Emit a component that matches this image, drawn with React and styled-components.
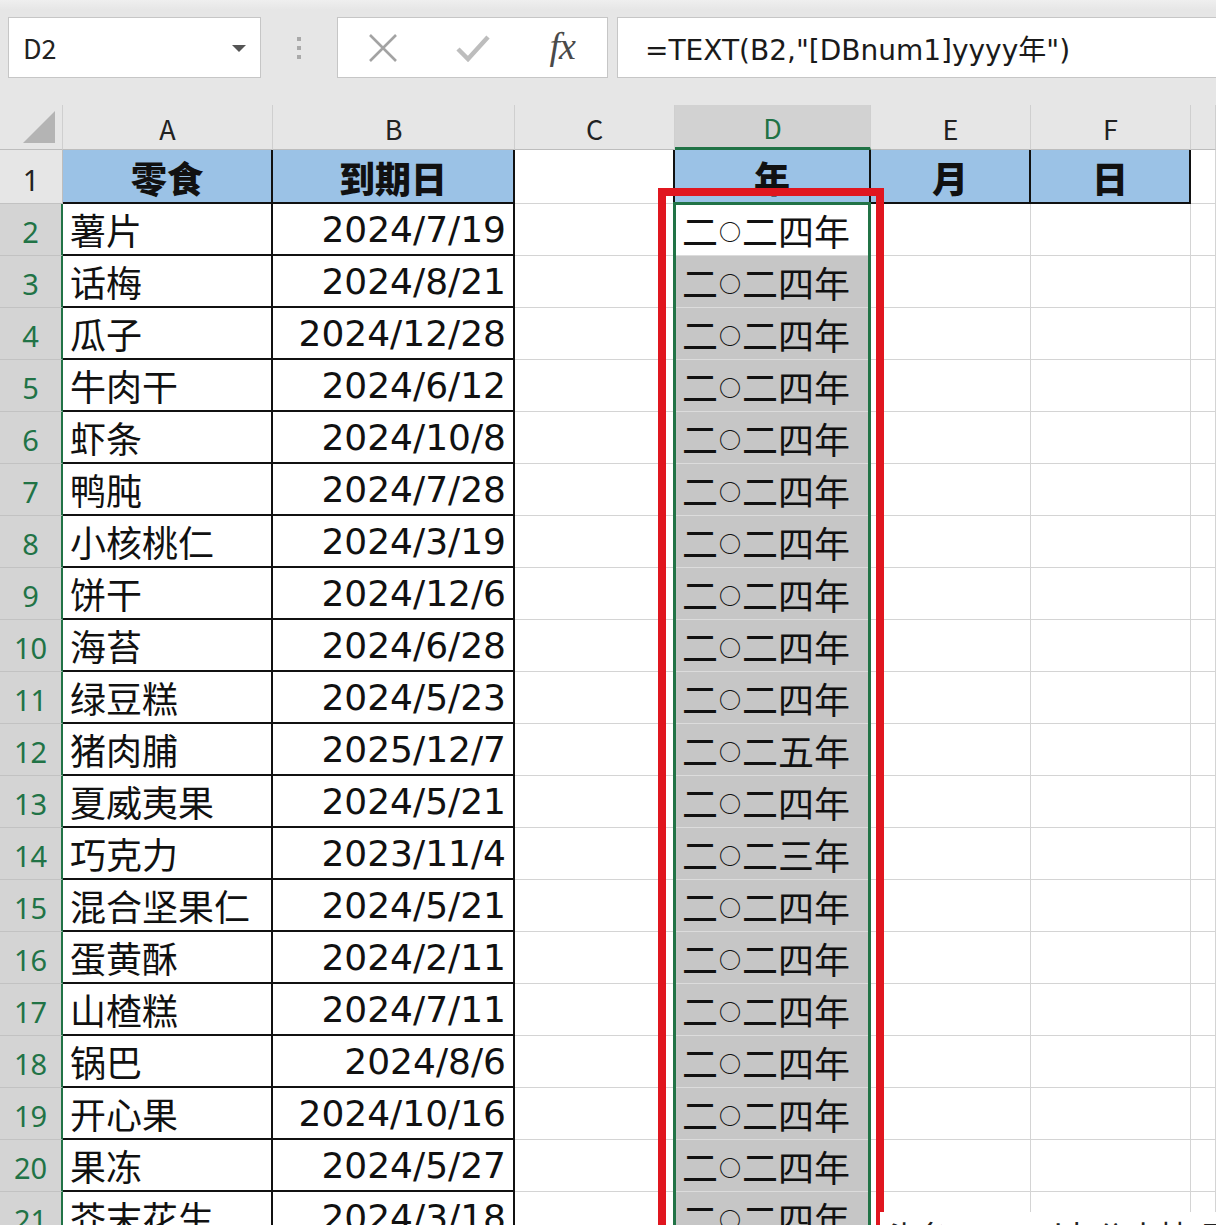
import React from 'react';
import styled, { createGlobalStyle } from 'styled-components';

const GREEN = '#217346';
const GRID = '#d4d4d4';
const BLUE = '#9bc2e6';
const CJK = '"Noto Sans CJK SC", "Noto Sans", sans-serif';

const snacks = [
  ['薯片', '2024/7/19'],
  ['话梅', '2024/8/21'],
  ['瓜子', '2024/12/28'],
  ['牛肉干', '2024/6/12'],
  ['虾条', '2024/10/8'],
  ['鸭肫', '2024/7/28'],
  ['小核桃仁', '2024/3/19'],
  ['饼干', '2024/12/6'],
  ['海苔', '2024/6/28'],
  ['绿豆糕', '2024/5/23'],
  ['猪肉脯', '2025/12/7'],
  ['夏威夷果', '2024/5/21'],
  ['巧克力', '2023/11/4'],
  ['混合坚果仁', '2024/5/21'],
  ['蛋黄酥', '2024/2/11'],
  ['山楂糕', '2024/7/11'],
  ['锅巴', '2024/8/6'],
  ['开心果', '2024/10/16'],
  ['果冻', '2024/5/27'],
  ['芥末花生', '2024/3/18'],
];

const DIGITS = ['○', '一', '二', '三', '四', '五', '六', '七', '八', '九'];

const yearText = (date) =>
  date
    .slice(0, 4)
    .split('')
    .map((d) => DIGITS[Number(d)])
    .join('') + '年';

const GlobalStyle = createGlobalStyle`
  html, body {
    margin: 0;
    padding: 0;
    background: #fff;
    overflow: hidden;
  }
  body {
    font-family: ${CJK};
  }
`;

const Page = styled.div`
  position: relative;
  width: 1216px;
  height: 1225px;
  overflow: hidden;
  background: #fff;
`;

//@ Formula bar

const Toolbar = styled.div`
  display: flex;
  align-items: flex-start;
  height: 105px;
  box-sizing: border-box;
  padding: 17px 0 0 8px;
  background: linear-gradient(#efefef 0px, #e6e6e6 10px);
`;

const NameBox = styled.div`
  display: flex;
  align-items: center;
  justify-content: space-between;
  width: 253px;
  height: 61px;
  box-sizing: border-box;
  padding: 0 14px 0 14px;
  background: #fff;
  border: 1px solid #c6c6c6;
  font-family: ${CJK};
  font-size: 27px;
  color: #222;
`;

const Caret = styled.span`
  width: 0;
  height: 0;
  border-left: 7px solid transparent;
  border-right: 7px solid transparent;
  border-top: 7px solid #555;
  margin-top: 2px;
`;

const Grip = styled.div`
  display: flex;
  flex-direction: column;
  align-items: center;
  justify-content: center;
  gap: 5px;
  width: 76px;
  height: 61px;
  span {
    width: 4px;
    height: 4px;
    background: #a9a9a9;
  }
`;

const ButtonGroup = styled.div`
  display: flex;
  width: 271px;
  height: 61px;
  box-sizing: border-box;
  background: #fff;
  border: 1px solid #c6c6c6;
`;

const ToolSlot = styled.div`
  display: flex;
  align-items: center;
  justify-content: center;
  width: 90px;
`;

const Fx = styled.span`
  font-family: 'Liberation Serif', serif;
  font-style: italic;
  font-size: 38px;
  color: #4a4a4a;
  letter-spacing: -1px;
  margin-top: -4px;
`;

const FormulaBox = styled.div`
  display: flex;
  align-items: center;
  flex: 1;
  height: 61px;
  margin-left: 9px;
  box-sizing: border-box;
  padding-left: 27px;
  background: #fff;
  border: 1px solid #c6c6c6;
  border-right: none;
  font-family: "DejaVu Sans", ${CJK};
  font-size: 28px;
  color: #1a1a1a;
`;

//@ Sheet

const SheetWrap = styled.div`
  position: relative;
`;

const Sheet = styled.div`
  display: grid;
  grid-template-columns: 63px 210px 242px 160px 196px 160px 160px 1fr;
  grid-template-rows: 45px 54px;
  grid-auto-rows: 52px;
`;

const Corner = styled.div`
  display: flex;
  align-items: flex-end;
  justify-content: flex-end;
  padding: 0 7px 6px 0;
  background: #e6e6e6;
  border-right: 1px solid #cfcfcf;
  border-bottom: 1px solid #bdbdbd;
`;

const ColHead = styled.div`
  display: flex;
  align-items: center;
  justify-content: center;
  box-sizing: border-box;
  padding-top: 2px;
  font-family: ${CJK};
  font-size: 27px;
  background: ${({ $active }) => ($active ? '#d2d2d2' : '#e6e6e6')};
  color: ${({ $active }) => ($active ? GREEN : '#222')};
  border-right: 1px solid #cfcfcf;
  border-bottom: ${({ $active }) =>
    $active ? `3px solid ${GREEN}` : '1px solid #bdbdbd'};
`;

const RowHead = styled.div`
  display: flex;
  align-items: flex-end;
  justify-content: center;
  box-sizing: border-box;
  padding-bottom: 4px;
  font-family: 'Noto Sans', sans-serif;
  font-size: 29px;
  background: ${({ $active }) => ($active ? '#d4d4d4' : '#e6e6e6')};
  color: ${({ $active }) => ($active ? GREEN : '#222')};
  border-bottom: 1px solid #c2c2c2;
  border-right: ${({ $active }) =>
    $active ? `2px solid ${GREEN}` : '1px solid #bdbdbd'};
`;

const Cell = styled.div`
  display: flex;
  align-items: flex-end;
  justify-content: ${({ $align }) =>
    $align === 'right' ? 'flex-end' : $align === 'center' ? 'center' : 'flex-start'};
  box-sizing: border-box;
  min-width: 0;
  overflow: hidden;
  white-space: nowrap;
  padding: 0 7px 3px 7px;
  background: ${({ $bg }) => $bg || '#fff'};
  border-right: ${({ $br }) => $br || `1px solid ${GRID}`};
  border-bottom: ${({ $bb }) => $bb || `1px solid ${GRID}`};
  font-family: ${({ $num }) => ($num ? `"DejaVu Sans", ${CJK}` : CJK)};
  font-size: 36px;
  font-weight: ${({ $bold }) => ($bold ? 900 : 400)};
  line-height: 1.2;
  color: #111;
`;

const Ring = styled.span`
  font-size: 22px;
  font-weight: 700;
  vertical-align: 6px;
  margin: 0 1px;
`;

const Selection = styled.div`
  position: absolute;
  left: 673px;
  top: 97px;
  width: 198px;
  height: 1100px;
  box-sizing: border-box;
  border: 3px solid ${GREEN};
  pointer-events: none;
`;

const Highlight = styled.div`
  position: absolute;
  left: 658px;
  top: 83px;
  width: 226px;
  height: 1200px;
  box-sizing: border-box;
  border: 8px solid #e0161f;
  pointer-events: none;
`;

const Watermark = styled.div`
  position: absolute;
  left: 880px;
  top: 1212px;
  padding: 0 6px;
  background: #fff;
  font-family: ${CJK};
  font-size: 32px;
  color: #222;
  white-space: nowrap;
`;

const BLACK = '2px solid #111';

const YearText = ({ text }) => (
  <span>
    {text.split('').map((ch, i) =>
      ch === '○' ? <Ring key={i}>○</Ring> : <React.Fragment key={i}>{ch}</React.Fragment>
    )}
  </span>
);

const App = () => {
  return (
    <Page>
      <GlobalStyle />
      <Toolbar>
        <NameBox>
          D2
          <Caret />
        </NameBox>
        <Grip>
          <span />
          <span />
          <span />
        </Grip>
        <ButtonGroup>
          <ToolSlot>
            <svg width="30" height="30" viewBox="0 0 30 30">
              <path d="M2 2 L28 28 M28 2 L2 28" stroke="#a3a3a3" strokeWidth="2.6" fill="none" />
            </svg>
          </ToolSlot>
          <ToolSlot>
            <svg width="34" height="28" viewBox="0 0 34 28">
              <path d="M2 15 L12 25 L32 3" stroke="#bdbdbd" strokeWidth="4.5" fill="none" />
            </svg>
          </ToolSlot>
          <ToolSlot>
            <Fx>fx</Fx>
          </ToolSlot>
        </ButtonGroup>
        <FormulaBox>=TEXT(B2,"[DBnum1]yyyy年")</FormulaBox>
      </Toolbar>

      <SheetWrap>
        <Sheet>
          <Corner>
            <svg width="32" height="32" viewBox="0 0 32 32">
              <polygon points="32,0 32,32 0,32" fill="#b4b4b4" />
            </svg>
          </Corner>
          {['A', 'B', 'C', 'D', 'E', 'F', ''].map((c) => (
            <ColHead key={c || 'g'} $active={c === 'D'}>
              {c}
            </ColHead>
          ))}

          <RowHead>1</RowHead>
          <Cell $bg={BLUE} $align="center" $bold $br={BLACK} $bb={BLACK}>
            零食
          </Cell>
          <Cell $bg={BLUE} $align="center" $bold $br={BLACK} $bb={BLACK}>
            到期日
          </Cell>
          <Cell $br={BLACK} />
          <Cell $bg={BLUE} $align="center" $bold $br={BLACK} $bb={BLACK}>
            年
          </Cell>
          <Cell $bg={BLUE} $align="center" $bold $br={BLACK} $bb={BLACK}>
            月
          </Cell>
          <Cell $bg={BLUE} $align="center" $bold $br={BLACK} $bb={BLACK}>
            日
          </Cell>
          <Cell />

          {snacks.map(([name, date], i) => (
            <React.Fragment key={name}>
              <RowHead $active>{i + 2}</RowHead>
              <Cell $br={BLACK} $bb={BLACK}>
                {name}
              </Cell>
              <Cell $num $align="right" $br={BLACK} $bb={BLACK}>
                {date}
              </Cell>
              <Cell />
              <Cell $bg={i === 0 ? '#fff' : '#c6c6c6'} $bb="1px solid #dcdcdc">
                <YearText text={yearText(date)} />
              </Cell>
              <Cell />
              <Cell />
              <Cell />
            </React.Fragment>
          ))}
        </Sheet>
        <Selection />
        <Highlight />
      </SheetWrap>
      <Watermark>头条 @Excel办公小技巧</Watermark>
    </Page>
  );
};

export default App;
